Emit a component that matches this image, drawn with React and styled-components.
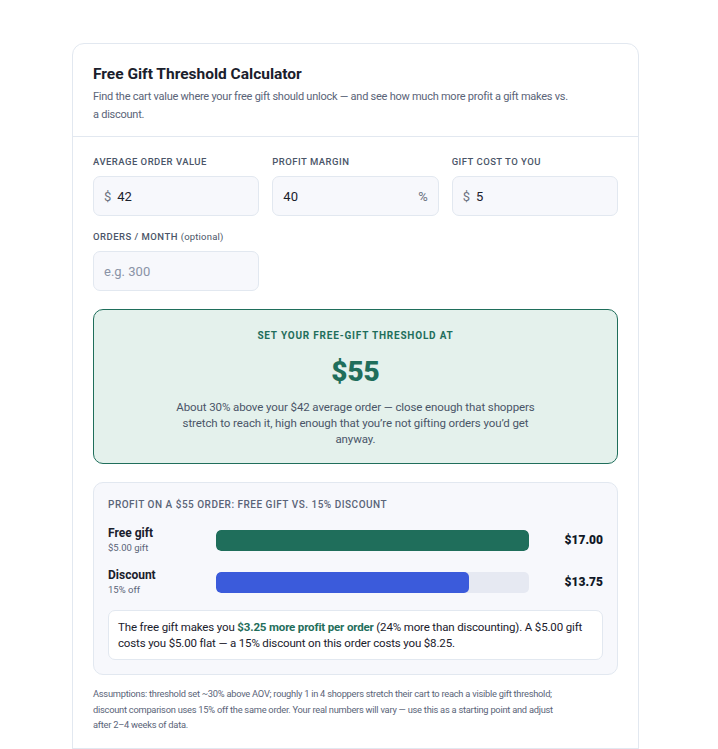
import React from "react";
import styled, { createGlobalStyle } from "styled-components";

const GlobalStyle = createGlobalStyle`
  * { box-sizing: border-box; }
  body {
    margin: 0;
    background: #ffffff;
    font-family: Roboto, "Noto Sans", sans-serif;
    color: #1a202c;
  }
`;

const inputs = [
  { label: "Average order value", prefix: "$", value: "42" },
  { label: "Profit margin", suffix: "%", value: "40" },
  { label: "Gift cost to you", prefix: "$", value: "5" },
];

const rows = [
  { name: "Free gift", sub: "$5.00 gift", pct: 100, color: "#1f6e5b", amount: "$17.00" },
  { name: "Discount", sub: "15% off", pct: 80.8, color: "#3b5bdb", amount: "$13.75" },
];

export default function App() {
  return (
    <Page>
      <GlobalStyle />
      <Card>
        <Header>
          <Title>Free Gift Threshold Calculator</Title>
          <Subtitle>
            Find the cart value where your free gift should unlock — and see how much more
            profit a gift makes vs. a discount.
          </Subtitle>
        </Header>

        <Body>
          <FieldGrid>
            {inputs.map((f) => (
              <Field key={f.label}>
                <Label>{f.label}</Label>
                <InputBox>
                  {f.prefix && <Affix>{f.prefix}</Affix>}
                  <Input defaultValue={f.value} />
                  {f.suffix && <Affix>{f.suffix}</Affix>}
                </InputBox>
              </Field>
            ))}
            <Field>
              <Label>
                Orders / month <Optional>(optional)</Optional>
              </Label>
              <InputBox>
                <Input placeholder="e.g. 300" />
              </InputBox>
            </Field>
          </FieldGrid>

          <Result>
            <ResultLabel>Set your free-gift threshold at</ResultLabel>
            <ResultValue>$55</ResultValue>
            <ResultText>
              About 30% above your $42 average order — close enough that shoppers stretch to
              reach it, high enough that you’re not gifting orders you’d get anyway.
            </ResultText>
          </Result>

          <Compare>
            <CompareTitle>Profit on a $55 order: free gift vs. 15% discount</CompareTitle>
            {rows.map((r) => (
              <Row key={r.name}>
                <RowLabel>
                  <RowName>{r.name}</RowName>
                  <RowSub>{r.sub}</RowSub>
                </RowLabel>
                <Track>
                  <Fill $color={r.color} style={{ width: `${r.pct}%` }} />
                </Track>
                <Amount>{r.amount}</Amount>
              </Row>
            ))}
            <Note>
              The free gift makes you <Strong>$3.25 more profit per order</Strong> (24% more
              than discounting). A $5.00 gift costs you $5.00 flat — a 15% discount on this
              order costs you $8.25.
            </Note>
          </Compare>

          <Assumptions>
            Assumptions: threshold set ~30% above AOV; roughly 1 in 4 shoppers stretch their cart
            to reach a visible gift threshold; discount comparison uses 15% off the same order.
            Your real numbers will vary — use this as a starting point and adjust after 2–4 weeks
            of data.
          </Assumptions>
        </Body>

        <Footer>Built for store owners comparing gift and discount offers.</Footer>
      </Card>
    </Page>
  );
}

const Page = styled.div`
  padding: 43px 0 40px 72px;
`;

const Card = styled.div`
  width: 567px;
  background: #ffffff;
  border: 1px solid #e2e8f0;
  border-radius: 12px;
`;

const Header = styled.div`
  padding: 21px 20px 12px;
  border-bottom: 1px solid #e2e8f0;
`;

const Title = styled.h1`
  margin: 0;
  font-size: 15.5px;
  line-height: 18px;
  font-weight: 700;
  color: #1a202c;
`;

const Subtitle = styled.p`
  max-width: 480px;
  margin: 5px 0 0;
  font-size: 11px;
  line-height: 18px;
  letter-spacing: -0.25px;
  color: #5a6478;
`;

const Body = styled.div`
  padding: 18px 20px 15px;
`;

const FieldGrid = styled.div`
  display: grid;
  grid-template-columns: repeat(3, minmax(0, 1fr));
  column-gap: 13px;
  row-gap: 14px;
`;

const Field = styled.div`
  display: flex;
  flex-direction: column;
  gap: 7px;
  min-width: 0;
`;

const Label = styled.label`
  font-size: 9.5px;
  line-height: 14px;
  font-weight: 500;
  letter-spacing: 0.05em;
  text-transform: uppercase;
  color: #4a5568;
`;

const Optional = styled.span`
  text-transform: none;
  font-weight: 400;
  letter-spacing: 0.02em;
`;

const InputBox = styled.div`
  display: flex;
  align-items: center;
  gap: 6px;
  height: 40px;
  padding: 0 10px;
  background: #f7f8fc;
  border: 1px solid #e2e8f0;
  border-radius: 7px;
`;

const Affix = styled.span`
  font-size: 13px;
  color: #6b7280;
`;

const Input = styled.input`
  flex: 1;
  width: 100%;
  min-width: 0;
  border: none;
  outline: none;
  background: transparent;
  padding: 0;
  font-family: inherit;
  font-size: 13px;
  color: #1a202c;

  &::placeholder {
    color: #8a93a6;
  }
`;

const Result = styled.div`
  margin-top: 18px;
  padding: 19px 70px 16px;
  background: #e4f1ec;
  border: 1px solid #1f6e5b;
  border-radius: 10px;
  text-align: center;
`;

const ResultLabel = styled.div`
  font-size: 10px;
  line-height: 14px;
  font-weight: 700;
  letter-spacing: 0.08em;
  text-transform: uppercase;
  color: #1f6e5b;
`;

const ResultValue = styled.div`
  margin: 11px 0 9px;
  font-size: 28px;
  line-height: 36px;
  font-weight: 900;
  color: #1f6e5b;
`;

const ResultText = styled.p`
  margin: 0;
  font-size: 11.5px;
  line-height: 16px;
  letter-spacing: -0.1px;
  color: #4a5568;
`;

const Compare = styled.div`
  margin-top: 18px;
  padding: 15px 14px 14px;
  background: #f7f8fc;
  border: 1px solid #e2e8f0;
  border-radius: 10px;
`;

const CompareTitle = styled.div`
  margin-bottom: 13px;
  font-size: 10px;
  line-height: 14px;
  font-weight: 500;
  letter-spacing: 0.05em;
  text-transform: uppercase;
  color: #5a6478;
`;

const Row = styled.div`
  display: grid;
  grid-template-columns: 100px minmax(0, 1fr) 66px;
  column-gap: 8px;
  align-items: center;
  margin-bottom: 12px;

  & + & {
    margin-bottom: 13px;
  }
`;

const RowLabel = styled.div`
  display: flex;
  flex-direction: column;
`;

const RowName = styled.span`
  font-size: 12px;
  line-height: 16px;
  font-weight: 700;
  color: #1a202c;
`;

const RowSub = styled.span`
  font-size: 9.5px;
  line-height: 14px;
  color: #5a6478;
`;

const Track = styled.div`
  height: 21px;
  background: #e6e9f2;
  border-radius: 5px;
  overflow: hidden;
`;

const Fill = styled.div`
  height: 100%;
  background: ${({ $color }) => $color};
  border-radius: 5px;
`;

const Amount = styled.span`
  text-align: right;
  font-size: 12px;
  font-weight: 900;
  color: #111827;
`;

const Note = styled.div`
  padding: 8px 9px;
  background: #ffffff;
  border: 1px solid #e2e8f0;
  border-radius: 7px;
  font-size: 11.5px;
  line-height: 16px;
  letter-spacing: -0.15px;
  color: #1a202c;
`;

const Strong = styled.strong`
  font-weight: 700;
  color: #1f6e5b;
`;

const Assumptions = styled.p`
  max-width: 476px;
  margin: 11px 0 0;
  font-size: 9.3px;
  line-height: 15.5px;
  letter-spacing: -0.25px;
  color: #5a6478;
`;

const Footer = styled.div`
  padding: 14px 20px;
  border-top: 1px solid #e2e8f0;
  font-size: 11px;
  color: #5a6478;
`;
